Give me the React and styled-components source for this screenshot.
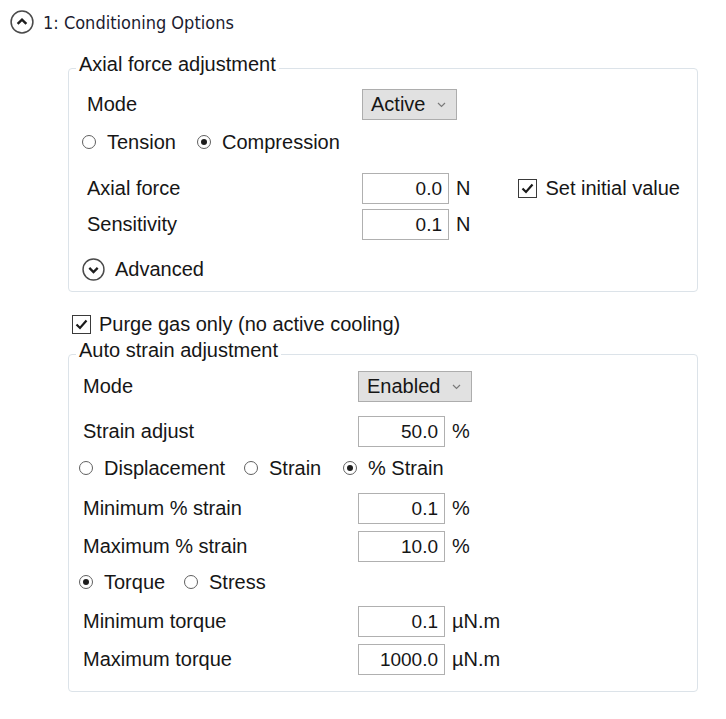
import React from 'react';
import styled, { createGlobalStyle } from 'styled-components';

const GlobalStyle = createGlobalStyle`
  html, body { margin: 0; padding: 0; background: #fff; }
  body { font-family: "Liberation Sans", Arial, sans-serif; color: #161616; }
`;

const Page = styled.div`
  width: 726px;
  height: 719px;
  box-sizing: border-box;
  padding-top: 10px;
  overflow: hidden;
`;

const Header = styled.div`
  display: flex;
  align-items: center;
  gap: 9px;
  height: 24px;
  padding-left: 10px;
  font-family: "DejaVu Sans Condensed", "DejaVu Sans", sans-serif;
  font-size: 18px;
  color: #1c1c30;
`;

const Content = styled.div`
  margin-left: 68px;
  width: 630px;
  margin-top: 19px;
`;

const Group = styled.fieldset`
  margin: ${p => p.$mt}px 0 0;
  width: 100%;
  box-sizing: border-box;
  min-width: 0;
  border: 1px solid #dce3e9;
  border-radius: 4px;
  padding: 0;
`;

const GroupBody = styled.div`
  padding: 0 0 ${p => p.$pb}px ${p => p.$pl}px;
`;

const Legend = styled.legend`
  margin-left: 7px;
  padding: 0 3px 8px;
  font-size: 20px;
  line-height: 23px;
`;

const Row = styled.div`
  display: flex;
  align-items: center;
  height: ${p => p.$h || 31}px;
  margin-top: ${p => p.$mt || 0}px;
  font-size: 20px;
`;

const Label = styled.span`
  flex: none;
  box-sizing: border-box;
  width: ${p => p.$w}px;
  padding-left: ${p => p.$indent}px;
`;

const Select = styled.div`
  display: flex;
  align-items: center;
  justify-content: space-between;
  width: ${p => p.$w}px;
  height: 31px;
  box-sizing: border-box;
  border: 1px solid #adadad;
  background: #e1e1e1;
  padding: 0 10px 0 8px;
  font-size: 20px;
`;

const Field = styled.div`
  width: 87px;
  height: 31px;
  box-sizing: border-box;
  border: 1px solid #b0b0b0;
  background: #fff;
  display: flex;
  align-items: center;
  justify-content: flex-end;
  padding-right: 6px;
  font-size: 19px;
`;

const Unit = styled.span`
  margin-left: 7px;
`;

const RadioItem = styled.span`
  display: flex;
  align-items: center;
  flex: none;
  width: ${p => (p.$w ? `${p.$w}px` : 'auto')};
`;

const RadioCircle = styled.span`
  flex: none;
  width: 14px;
  height: 14px;
  box-sizing: border-box;
  border: 1px solid #606060;
  border-radius: 50%;
  display: flex;
  align-items: center;
  justify-content: center;
  margin-right: 11px;
  &::after {
    content: '';
    display: ${p => (p.$on ? 'block' : 'none')};
    width: 6px;
    height: 6px;
    border-radius: 50%;
    background: #1e1e1e;
  }
`;

const CheckItem = styled.span`
  display: flex;
  align-items: center;
  gap: 8px;
  margin-left: ${p => p.$ml || 0}px;
`;

const CheckBox = styled.span`
  flex: none;
  width: 19px;
  height: 19px;
  box-sizing: border-box;
  border: 1px solid #3a3a3a;
  background: #fff;
  display: flex;
  align-items: center;
  justify-content: center;
`;

const ToggleRow = styled.div`
  display: flex;
  align-items: center;
  gap: 10px;
  height: 24px;
  margin-top: ${p => p.$mt || 0}px;
  font-size: 20px;
`;

const Chevron = () => (
  <svg width="9" height="6" viewBox="0 0 9 6">
    <path d="M1 1 L4.5 4.5 L8 1" fill="none" stroke="#7a7a7a" strokeWidth="1.2" />
  </svg>
);

const Check = () => (
  <svg width="13" height="11" viewBox="0 0 13 11">
    <path d="M1.5 5.5 L5 9 L11.5 1.5" fill="none" stroke="#1a1a1a" strokeWidth="2.2" />
  </svg>
);

const CircleChevron = ({ up, size }) => (
  <svg width={size} height={size} viewBox="0 0 22 22">
    <circle cx="11" cy="11" r="10" fill="none" stroke="#4a4a4a" strokeWidth="1.4" />
    <path
      d={up ? 'M7 12.8 L11 8.8 L15 12.8' : 'M7 9.4 L11 13.4 L15 9.4'}
      fill="none"
      stroke="#1e1e1e"
      strokeWidth="2.2"
    />
  </svg>
);

const Radio = ({ on, w, children }) => (
  <RadioItem $w={w}>
    <RadioCircle $on={on} />
    {children}
  </RadioItem>
);

const Checkbox = ({ ml, children }) => (
  <CheckItem $ml={ml}>
    <CheckBox>
      <Check />
    </CheckBox>
    {children}
  </CheckItem>
);

const FieldRow = ({ mt, label, value, unit, lw, li, children }) => (
  <Row $mt={mt}>
    <Label $w={lw} $indent={li}>{label}</Label>
    <Field>{value}</Field>
    <Unit>{unit}</Unit>
    {children}
  </Row>
);

export default function App() {
  return (
    <Page>
      <GlobalStyle />
      <Header>
        <CircleChevron up size={24} />
        <span>1: Conditioning Options</span>
      </Header>
      <Content>
        <Group $mt={0}>
          <Legend>Axial force adjustment</Legend>
          <GroupBody $pb={10} $pl={13}>
            <Row $mt={5}>
              <Label $w={280} $indent={5}>Mode</Label>
              <Select $w={95}>
                <span>Active</span>
                <Chevron />
              </Select>
            </Row>
            <Row $mt={10} $h={24}>
              <Radio w={115}>Tension</Radio>
              <Radio on>Compression</Radio>
            </Row>
            <FieldRow mt={19} lw={280} li={5} label="Axial force" value="0.0" unit="N">
              <Checkbox ml={48}>Set initial value</Checkbox>
            </FieldRow>
            <FieldRow mt={5} lw={280} li={5} label="Sensitivity" value="0.1" unit="N" />
            <ToggleRow $mt={17}>
              <CircleChevron size={23} />
              <span>Advanced</span>
            </ToggleRow>
          </GroupBody>
        </Group>

        <Row $mt={20} $h={24}>
          <Checkbox ml={4}>Purge gas only (no active cooling)</Checkbox>
        </Row>

        <Group $mt={3}>
          <Legend>Auto strain adjustment</Legend>
          <GroupBody $pb={16} $pl={10}>
            <Row $mt={1}>
              <Label $w={279} $indent={4}>Mode</Label>
              <Select $w={114}>
                <span>Enabled</span>
                <Chevron />
              </Select>
            </Row>
            <FieldRow mt={14} lw={279} li={4} label="Strain adjust" value="50.0" unit="%" />
            <Row $mt={9} $h={24}>
              <Radio w={165}>Displacement</Radio>
              <Radio w={99}>Strain</Radio>
              <Radio on>% Strain</Radio>
            </Row>
            <FieldRow mt={13} lw={279} li={4} label="Minimum % strain" value="0.1" unit="%" />
            <FieldRow mt={7} lw={279} li={4} label="Maximum % strain" value="10.0" unit="%" />
            <Row $mt={8} $h={24}>
              <Radio on w={105}>Torque</Radio>
              <Radio>Stress</Radio>
            </Row>
            <FieldRow mt={12} lw={279} li={4} label="Minimum torque" value="0.1" unit="µN.m" />
            <FieldRow mt={7} lw={279} li={4} label="Maximum torque" value="1000.0" unit="µN.m" />
          </GroupBody>
        </Group>
      </Content>
    </Page>
  );
}
